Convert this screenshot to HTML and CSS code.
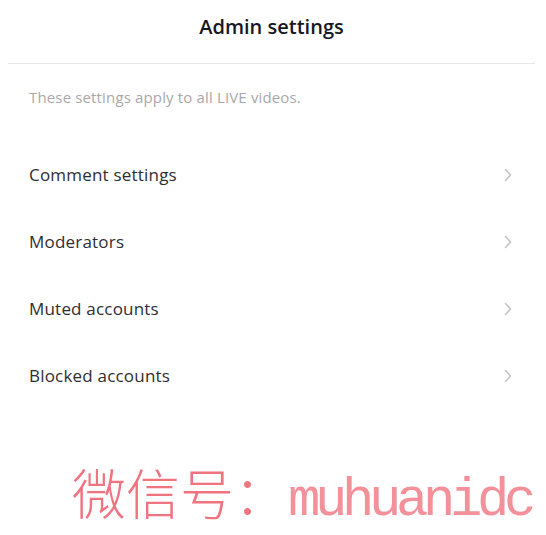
FILE: index.html
```html
<!DOCTYPE html>
<html lang="en">
<head>
  <meta charset="UTF-8">
  <meta name="viewport" content="width=device-width, initial-scale=1.0">
  <title>Admin settings</title>
  <link rel="stylesheet" href="styles.css">
</head>
<body>
  <div class="header">
    <h1>Admin settings</h1>
  </div>
  <p class="note">These settings apply to all LIVE videos.</p>
  <ul class="menu">
    <li class="menu-item">
      <span>Comment settings</span>
      <svg class="chevron" width="8" height="14" viewBox="0 0 8 14"><path d="M1.5 1.5 L6.5 7 L1.5 12.5" /></svg>
    </li>
    <li class="menu-item">
      <span>Moderators</span>
      <svg class="chevron" width="8" height="14" viewBox="0 0 8 14"><path d="M1.5 1.5 L6.5 7 L1.5 12.5" /></svg>
    </li>
    <li class="menu-item">
      <span>Muted accounts</span>
      <svg class="chevron" width="8" height="14" viewBox="0 0 8 14"><path d="M1.5 1.5 L6.5 7 L1.5 12.5" /></svg>
    </li>
    <li class="menu-item">
      <span>Blocked accounts</span>
      <svg class="chevron" width="8" height="14" viewBox="0 0 8 14"><path d="M1.5 1.5 L6.5 7 L1.5 12.5" /></svg>
    </li>
  </ul>
  <div class="watermark">微信号：<span class="wm-latin">muhuanidc</span></div>
</body>
</html>
```

FILE: styles.css
```css
body {
  margin: 0;
  background: #fff;
  font-family: "Open Sans", "Liberation Sans", sans-serif;
  color: #161823;
}
.header {
  height: 63px;
  margin: 0 11px 0 8px;
  border-bottom: 1px solid #e8e8e8;
  display: flex;
  align-items: center;
  justify-content: center;
}
.header h1 {
  margin: 0 0 10px;
  font-size: 20px;
  font-weight: 600;
  color: #161823;
}
.note {
  margin: 0;
  padding: 23px 0 0 29px;
  font-size: 15px;
  letter-spacing: 0.15px;
  color: #a8a8aa;
}
.menu {
  list-style: none;
  margin: 34px 0 0;
  padding: 0;
}
.menu-item {
  height: 67px;
  padding: 0 34px 0 29px;
  display: flex;
  align-items: center;
  justify-content: space-between;
  font-size: 17px;
  letter-spacing: 0.2px;
  color: #2e2e32;
}
.chevron path {
  fill: none;
  stroke: #c4c4c6;
  stroke-width: 1.6;
  stroke-linecap: round;
  stroke-linejoin: round;
}
.watermark {
  margin: 56px 0 0 72px;
  font-family: "Noto Sans CJK SC", sans-serif;
  font-size: 54px;
  line-height: 1;
  color: #f07480;
  font-weight: 300;
}
.wm-latin {
  font-family: "Liberation Mono", monospace;
  letter-spacing: -5.4px;
  color: #f3909a;
}
```
